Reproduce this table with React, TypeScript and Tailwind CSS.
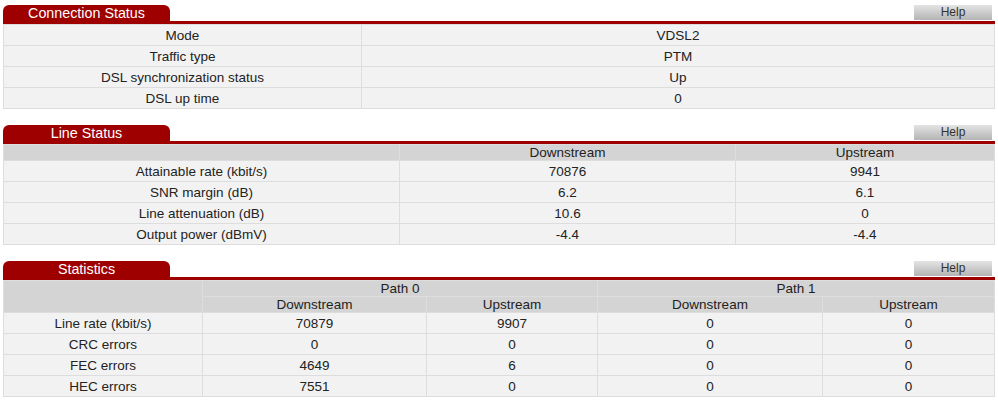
import React from "react";

const font = { fontFamily: '"Liberation Sans", Arial, sans-serif' };

function Header({ title }: { title: string }) {
  return (
    <div className="flex items-end justify-between border-b-[3px] border-[#9e0000]">
      <div className="w-[167px] h-[16px] bg-[#9e0000] rounded-t-[6px] text-white text-[14.3px] leading-[16px] text-center">
        {title}
      </div>
      <div className="w-[78px] h-[15px] mr-[3px] mb-[1px] bg-gradient-to-b from-[#e4e4e4] to-[#b4b4b4] text-[#333] text-[12px] leading-[15px] text-center">
        Help
      </div>
    </div>
  );
}

const td = "border border-[#dddddd] bg-[#f2f2f2] text-center h-[21px] p-0 leading-[19px]";
const th = "border border-[#dddddd] bg-[#d4d4d4] text-center h-[16px] p-0 font-normal leading-[14px]";

export default function App() {
  const conn = [
    ["Mode", "VDSL2"],
    ["Traffic type", "PTM"],
    ["DSL synchronization status", "Up"],
    ["DSL up time", "0"],
  ];
  const line = [
    ["Attainable rate (kbit/s)", "70876", "9941"],
    ["SNR margin (dB)", "6.2", "6.1"],
    ["Line attenuation (dB)", "10.6", "0"],
    ["Output power (dBmV)", "-4.4", "-4.4"],
  ];
  const stats = [
    ["Line rate (kbit/s)", "70879", "9907", "0", "0"],
    ["CRC errors", "0", "0", "0", "0"],
    ["FEC errors", "4649", "6", "0", "0"],
    ["HEC errors", "7551", "0", "0", "0"],
  ];
  return (
    <div className="w-[998px] h-[401px] bg-white px-[3px] pt-[5px] text-[13.5px] text-[#222]" style={font}>
      <Header title="Connection Status" />
      <table className="w-[992px] table-fixed border-collapse">
        <colgroup>
          <col className="w-[358px]" />
          <col />
        </colgroup>
        <tbody>
          {conn.map((r) => (
            <tr key={r[0]}>
              {r.map((c, i) => (
                <td key={i} className={td}>{c}</td>
              ))}
            </tr>
          ))}
        </tbody>
      </table>

      <div className="h-[16px]" />
      <Header title="Line Status" />
      <table className="w-[992px] table-fixed border-collapse">
        <colgroup>
          <col className="w-[396px]" />
          <col className="w-[336px]" />
          <col />
        </colgroup>
        <tbody>
          <tr>
            <th className={th}></th>
            <th className={th}>Downstream</th>
            <th className={th}>Upstream</th>
          </tr>
          {line.map((r) => (
            <tr key={r[0]}>
              {r.map((c, i) => (
                <td key={i} className={td}>{c}</td>
              ))}
            </tr>
          ))}
        </tbody>
      </table>

      <div className="h-[16px]" />
      <Header title="Statistics" />
      <table className="w-[992px] table-fixed border-collapse">
        <colgroup>
          <col className="w-[199px]" />
          <col className="w-[224px]" />
          <col className="w-[171px]" />
          <col className="w-[225px]" />
          <col />
        </colgroup>
        <tbody>
          <tr>
            <th className={th} rowSpan={2}></th>
            <th className={th} colSpan={2}>Path 0</th>
            <th className={th} colSpan={2}>Path 1</th>
          </tr>
          <tr>
            <th className={th}>Downstream</th>
            <th className={th}>Upstream</th>
            <th className={th}>Downstream</th>
            <th className={th}>Upstream</th>
          </tr>
          {stats.map((r) => (
            <tr key={r[0]}>
              {r.map((c, i) => (
                <td key={i} className={td}>{c}</td>
              ))}
            </tr>
          ))}
        </tbody>
      </table>
    </div>
  );
}
